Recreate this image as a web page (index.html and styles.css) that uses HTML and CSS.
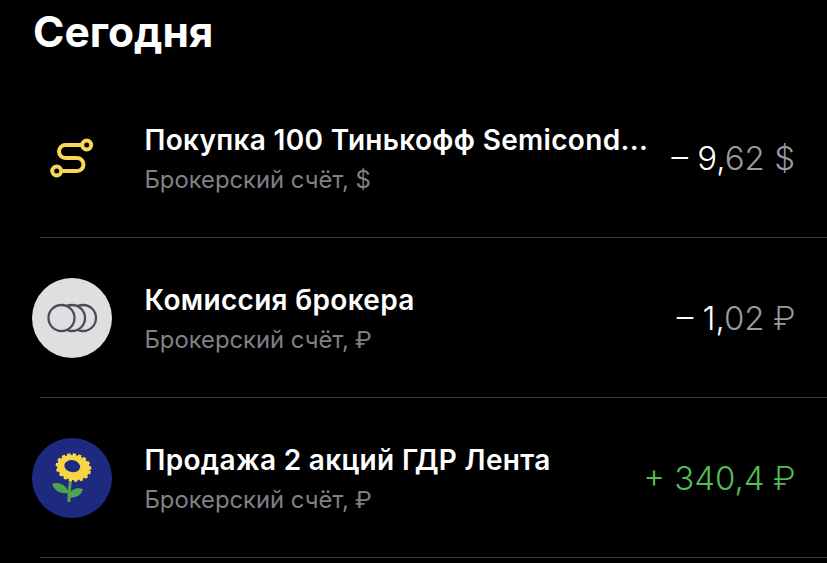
FILE: index.html
```html
<!DOCTYPE html>
<html lang="ru">
<head>
    <meta charset="UTF-8">
    <meta name="viewport" content="width=device-width, initial-scale=1.0">
    <title>Операции</title>
    <link rel="stylesheet" href="styles.css">
</head>
<body>
    <h1 class="day-title">Сегодня</h1>

    <div class="op-list">
        <div class="op-row">
            <div class="op-icon">
                <svg width="80" height="80" viewBox="0 0 80 80" fill="none" stroke="#f6d757" stroke-width="4" stroke-linecap="round">
                    <path d="M50 27H33.500a6.500 6.500 0 0 0 0 13H45a6.500 6.500 0 0 1 0 13H29.500"/>
                    <circle cx="54.700" cy="27" r="4.500"/>
                    <circle cx="24.700" cy="53" r="4.500"/>
                </svg>
            </div>
            <div class="op-text">
                <div class="op-name">Покупка 100 Тинькофф Semicond...</div>
                <div class="op-account">Брокерский счёт, $</div>
            </div>
            <div class="op-sum">– 9,<span class="sum-dim">62 $</span></div>
        </div>

        <div class="op-row">
            <div class="op-icon icon-grey">
                <svg width="80" height="80" viewBox="0 0 80 80" fill="none" stroke="#4c4d52" stroke-width="2.300">
                    <circle cx="51" cy="40" r="13"/>
                    <circle cx="40" cy="40" r="13" fill="#dfdfe1"/>
                    <circle cx="29.500" cy="40" r="13" fill="#dfdfe1"/>
                </svg>
            </div>
            <div class="op-text">
                <div class="op-name">Комиссия брокера</div>
                <div class="op-account">Брокерский счёт, <span class="rub">₽</span></div>
            </div>
            <div class="op-sum">– 1,<span class="sum-dim">02 <span class="rub">₽</span></span></div>
        </div>

        <div class="op-row">
            <div class="op-icon icon-blue">
                <svg width="80" height="80" viewBox="0 0 80 80" fill="none">
                    <path d="M38.500 42c-.5 5-2 12-1.500 22" stroke="#4ea44b" stroke-width="3"/>
                    <path d="M20 46c6-3 14 0 17 9-7 1-14-1-17-9z" fill="#4ea44b"/>
                    <path d="M51 51c-6-2-13 0-15 8 6 2 13-1 15-8z" fill="#4ea44b"/>
                    <g transform="rotate(12 41.500 29.500)">
                        <ellipse cx="41.500" cy="29.500" rx="16.500" ry="12.500" fill="#f6d645" stroke="#f6d645" stroke-width="3" stroke-dasharray="3.200 2.200"/>
                        <ellipse cx="40" cy="28.500" rx="8" ry="6" fill="#1d2a80"/>
                    </g>
                </svg>
            </div>
            <div class="op-text">
                <div class="op-name">Продажа 2 акций ГДР Лента</div>
                <div class="op-account">Брокерский счёт, <span class="rub">₽</span></div>
            </div>
            <div class="op-sum sum-plus">+ 340,4 <span class="rub">₽</span></div>
        </div>
    </div>
</body>
</html>
```

FILE: styles.css
```css
body {
    margin: 0;
    height: 563px;
    overflow: hidden;
    background: #000;
    color: #fff;
    font-family: Inter, "Liberation Sans", sans-serif;
}
.day-title {
    margin: 0;
    padding: 9px 0 0 33px;
    height: 78px;
    box-sizing: border-box;
    font-size: 42.5px;
    line-height: 46px;
    font-weight: 700;
}
.op-row {
    display: flex;
    align-items: center;
    height: 160px;
    box-sizing: border-box;
    padding-left: 32px;
    padding-right: 32px;
    position: relative;
}
.op-row::after {
    content: "";
    position: absolute;
    left: 40px;
    right: 0;
    bottom: 0;
    height: 1px;
    background: #3a3a3c;
}
.op-icon {
    width: 80px;
    height: 80px;
    border-radius: 50%;
    flex: none;
    margin-right: 32.500px;
}
.icon-grey {
    background: #dfdfe1;
}
.icon-blue {
    background: #1d2a80;
}
.op-text {
    flex: 1;
    min-width: 0;
    padding-top: 2px;
}
.op-name {
    font-size: 28px;
    line-height: 34px;
    font-weight: 600;
    letter-spacing: 0.32px;
    white-space: nowrap;
}
.op-account {
    margin-top: 8px;
    font-size: 23.800px;
    line-height: 30px;
    color: #808084;
}
.op-sum {
    font-size: 33px;
    line-height: 40px;
    font-weight: 300;
    white-space: nowrap;
}
.sum-dim {
    color: #9a9a9f;
}
.sum-plus {
    color: #55bb58;
}
.rub {
    font-family: Roboto, "DejaVu Sans", sans-serif;
}
```
